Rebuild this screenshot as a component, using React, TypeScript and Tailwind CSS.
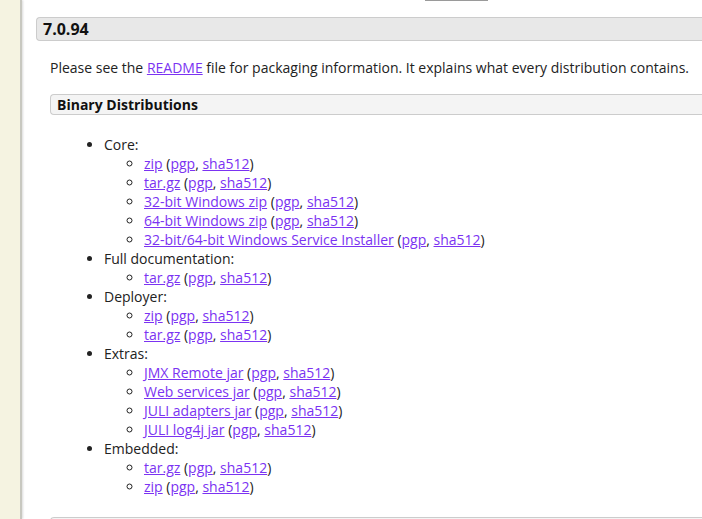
import React from "react";

const L = ({ children }: { children: React.ReactNode }) => (
  <a href="#" className="text-[#7b33f2] underline">
    {children}
  </a>
);

const Item = ({ name }: { name: string }) => (
  <li>
    <L>{name}</L> (<L>pgp</L>, <L>sha512</L>)
  </li>
);

const groups: { title: string; items: string[] }[] = [
  {
    title: "Core:",
    items: [
      "zip",
      "tar.gz",
      "32-bit Windows zip",
      "64-bit Windows zip",
      "32-bit/64-bit Windows Service Installer",
    ],
  },
  { title: "Full documentation:", items: ["tar.gz"] },
  { title: "Deployer:", items: ["zip", "tar.gz"] },
  {
    title: "Extras:",
    items: ["JMX Remote jar", "Web services jar", "JULI adapters jar", "JULI log4j jar"],
  },
  { title: "Embedded:", items: ["tar.gz", "zip"] },
];

export default function App() {
  return (
    <div
      className="flex h-[519px] w-[702px] overflow-hidden bg-white text-[14px] leading-[19px] text-[#222]"
      style={{ fontFamily: '"Open Sans", "Noto Sans", sans-serif' }}
    >
      <div className="w-[22px] shrink-0 bg-[#f5f3e1] border-r-2 border-[#c8c8c0] shadow-[1px_0_2px_rgba(0,0,0,0.15)]" />
      <div className="flex-1 pl-[14px]">
        <div className="ml-[389px] h-[1px] w-[63px] bg-[#9a9a9a]" />
        <div className="mt-[16px] flex h-[24px] items-center rounded-l-[4px] border border-r-0 border-[#cccccc] bg-[#e8e8e8] pl-[6px] text-[16px] font-bold text-[#111]">
          7.0.94
        </div>
        <div className="pl-[14px]">
          <p className="mt-[17px]">
            Please see the <L>README</L> file for packaging information. It explains what every
            distribution contains.
          </p>
          <div className="mt-[17px] flex h-[21px] items-center rounded-l-[4px] border border-r-0 border-[#cccccc] bg-[#f4f4f4] pl-[6px] font-bold text-[#111]">
            Binary Distributions
          </div>
          <ul className="mt-[20px] list-disc pl-[54px]">
            {groups.map((g) => (
              <li key={g.title}>
                {g.title}
                <ul className="list-[circle] pl-[40px]">
                  {g.items.map((it, i) => (
                    <Item key={i} name={it} />
                  ))}
                </ul>
              </li>
            ))}
          </ul>
          <div className="mt-[21px] h-[20px] rounded-l-[4px] border border-r-0 border-[#cccccc] bg-[#f4f4f4]" />
        </div>
      </div>
    </div>
  );
}
